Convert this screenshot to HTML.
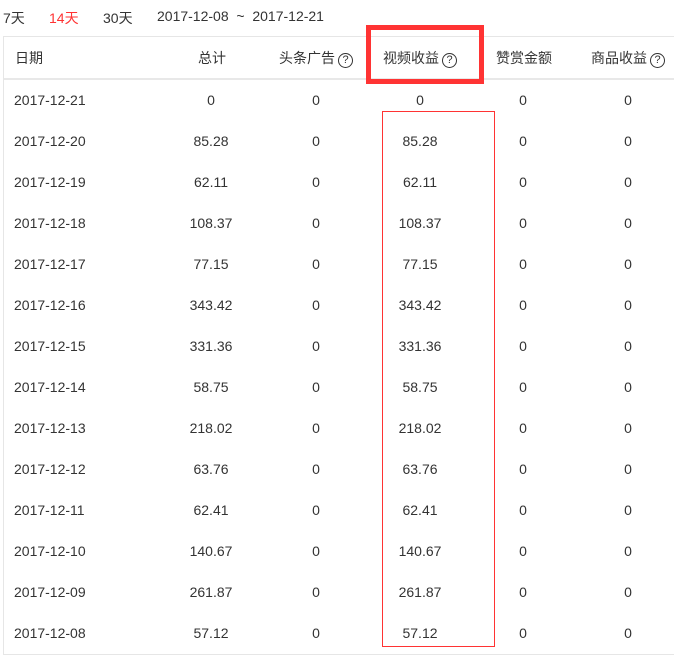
<!DOCTYPE html>
<html><head><meta charset="utf-8"><style>
body{margin:0;width:674px;height:658px;background:#fff;font-family:"Liberation Sans","Noto Sans CJK SC",sans-serif;color:#333;font-size:14px;position:relative;overflow:hidden}
.t{position:absolute;top:8px;font-size:14px;white-space:nowrap}
.tbl{position:absolute;left:3px;top:36px;width:680px;height:617px;border:1px solid #e6e6e6;border-right:none}
.hd{position:absolute;left:0;top:0;width:100%;height:41px;border-bottom:2px solid #e8e8e8}
.c{position:absolute;transform:translateX(-50%);white-space:nowrap}
.q{display:inline-block;width:13px;height:13px;border:1px solid #333;border-radius:50%;font-size:11px;line-height:13px;text-align:center;vertical-align:0px;margin-left:3px}
.rb{position:absolute;left:366px;top:25px;width:108px;height:49px;border:5px solid #f33}
.tb{position:absolute;left:382px;top:111px;width:111px;height:534px;border:1px solid #f33}
</style></head><body>
<div class="t" style="left:3px">7天</div>
<div class="t" style="left:49px;color:#f33">14天</div>
<div class="t" style="left:103px">30天</div>
<div class="t" style="left:157px">2017-12-08 &nbsp;~&nbsp; 2017-12-21</div>
<div class="tbl"><div class="hd"></div></div>
<div id="rows"></div>
<div class="rb"></div><div class="tb"></div>
<script>
var h='';var y=48;
h+='<div class="c" style="left:29px;top:'+y+'px">日期</div>';
h+='<div class="c" style="left:212px;top:'+y+'px">总计</div>';
h+='<div class="c" style="left:316px;top:'+y+'px">头条广告<span class="q">?</span></div>';
h+='<div class="c" style="left:420px;top:'+y+'px">视频收益<span class="q">?</span></div>';
h+='<div class="c" style="left:524px;top:'+y+'px">赞赏金额</div>';
h+='<div class="c" style="left:628px;top:'+y+'px">商品收益<span class="q">?</span></div>';
var d=[["21","0"],["20","85.28"],["19","62.11"],["18","108.37"],["17","77.15"],["16","343.42"],["15","331.36"],["14","58.75"],["13","218.02"],["12","63.76"],["11","62.41"],["10","140.67"],["09","261.87"],["08","57.12"]];
d.forEach(function(r,i){var t=92+i*41;
h+='<div style="position:absolute;left:14px;top:'+t+'px">2017-12-'+r[0]+'</div>';
h+='<div class="c" style="left:211px;top:'+t+'px">'+r[1]+'</div>';
h+='<div class="c" style="left:316px;top:'+t+'px">0</div>';
h+='<div class="c" style="left:420px;top:'+t+'px">'+r[1]+'</div>';
h+='<div class="c" style="left:523px;top:'+t+'px">0</div>';
h+='<div class="c" style="left:628px;top:'+t+'px">0</div>';});
document.getElementById('rows').innerHTML=h;
</script>
</body></html>
